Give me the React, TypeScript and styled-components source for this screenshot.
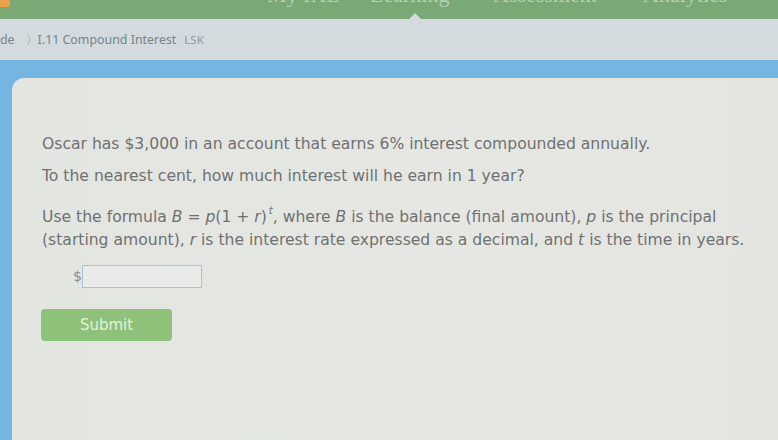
import React from "react";
import styled, { createGlobalStyle } from "styled-components";

const GlobalStyle = createGlobalStyle`
  html, body { margin: 0; padding: 0; background: #e4e6e1; }
  #root { width: 778px; height: 440px; }
`;

const Page = styled.div`
  width: 778px;
  height: 440px;
  overflow: hidden;
  display: flex;
  flex-direction: column;
  font-family: "DejaVu Sans", Verdana, sans-serif;
`;

const NavBar = styled.div`
  position: relative;
  height: 19px;
  flex: 0 0 19px;
  background: #7aa975;
  display: flex;
  align-items: flex-start;
  overflow: hidden;
`;

const Logo = styled.div`
  width: 10px;
  height: 7px;
  background: #e8a24a;
  border-bottom-right-radius: 3px;
`;

const NavList = styled.div`
  display: flex;
  margin-left: 257px;
`;

const NavItem = styled.span<{ $w: number }>`
  width: ${(p) => p.$w}px;
  font-family: "Liberation Serif", "DejaVu Serif", serif;
  font-size: 22px;
  line-height: 22px;
  margin-top: -16px;
  color: rgba(235, 245, 232, 0.55);
  white-space: nowrap;
`;

const Pointer = styled.div`
  position: absolute;
  left: 409px;
  bottom: 0;
  width: 0;
  height: 0;
  border-left: 6px solid transparent;
  border-right: 6px solid transparent;
  border-bottom: 6px solid #d2dadd;
`;

const Breadcrumb = styled.div`
  height: 41px;
  flex: 0 0 41px;
  background: #d3dbde;
  display: flex;
  align-items: center;
  font-family: "Noto Sans", "DejaVu Sans", sans-serif;
  color: #7d8a92;
  white-space: nowrap;
`;

const Crumb = styled.span<{ $gap?: number; $muted?: boolean }>`
  margin-left: ${(p) => p.$gap ?? 0}px;
  color: ${(p) => (p.$muted ? "#8a99a3" : "#76858d")};
  font-size: ${(p) => (p.$muted ? 11.5 : 12.4)}px;
`;

const Main = styled.div`
  flex: 1;
  background: #74b5e2;
  padding-top: 18px;
  padding-left: 12px;
  display: flex;
`;

const Card = styled.div`
  flex: 1;
  background: linear-gradient(90deg, #e3e5e0 0%, #e6e7e2 60%, #e4e5e0 100%);
  border-top-left-radius: 12px;
  padding: 55px 0 0 30px;
  color: #6f7171;
  font-size: 15.6px;
  line-height: 23px;
`;

const Para = styled.p<{ $top: number }>`
  margin: ${(p) => p.$top}px 0 0 0;
  width: 730px;
`;

const Var = styled.i`
  font-style: italic;
`;

const Sup = styled.sup`
  font-size: 10px;
  font-style: italic;
  line-height: 0;
  vertical-align: 8px;
  margin-left: 2px;
`;

const AnswerRow = styled.div`
  margin-top: 13px;
  padding-left: 31px;
  display: flex;
  align-items: center;
  gap: 0;
`;

const Dollar = styled.span`
  font-size: 14px;
  color: #8b8d8d;
`;

const Input = styled.input`
  width: 114px;
  height: 21px;
  border: 1px solid #a9c0dc;
  background: #e9ebe8;
  padding: 0 2px;
  outline: none;
`;

const SubmitButton = styled.button`
  margin-top: 21px;
  margin-left: -1px;
  width: 131px;
  height: 32px;
  border: none;
  border-radius: 4px;
  background: #8ec27b;
  color: #e4f0da;
  font-family: "DejaVu Sans", Verdana, sans-serif;
  font-size: 15px;
  padding: 0;
  display: block;
`;

export default function App() {
  return (
    <>
      <GlobalStyle />
      <Page>
        <NavBar>
          <Logo />
          <NavList>
            <NavItem $w={103}>My IXL</NavItem>
            <NavItem $w={123}>Learning</NavItem>
            <NavItem $w={150}>Assessment</NavItem>
            <NavItem $w={100}>Analytics</NavItem>
          </NavList>
          <Pointer />
        </NavBar>
        <Breadcrumb>
          <Crumb>de</Crumb>
          <Crumb $gap={11}>〉</Crumb>
          <Crumb $gap={0}>I.11 Compound Interest</Crumb>
          <Crumb $gap={8} $muted>LSK</Crumb>
        </Breadcrumb>
        <Main>
          <Card>
            <Para $top={0}>
              Oscar has $3,000 in an account that earns 6% interest compounded annually.
            </Para>
            <Para $top={9}>To the nearest cent, how much interest will he earn in 1 year?</Para>
            <Para $top={18}>
              Use the formula <Var>B</Var> = <Var>p</Var>(1 + <Var>r</Var>)<Sup>t</Sup>, where{" "}
              <Var>B</Var> is the balance (final amount), <Var>p</Var> is the principal (starting
              amount), <Var>r</Var> is the interest rate expressed as a decimal, and <Var>t</Var> is
              the time in years.
            </Para>
            <AnswerRow>
              <Dollar>$</Dollar>
              <Input type="text" aria-label="answer" />
            </AnswerRow>
            <SubmitButton>Submit</SubmitButton>
          </Card>
        </Main>
      </Page>
    </>
  );
}
